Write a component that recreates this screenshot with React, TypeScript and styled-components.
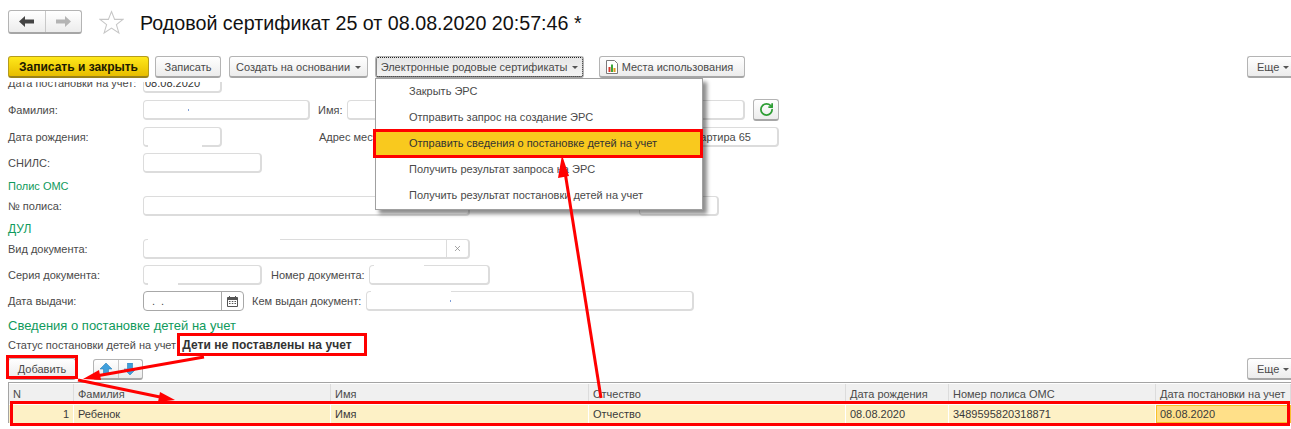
import React from "react"
import styled, { createGlobalStyle, css } from "styled-components"
import { RotateCw, X } from "lucide-react"

const GlobalStyle = createGlobalStyle`
  html, body {
    margin: 0;
    padding: 0;
    background: #fff;
    overflow: hidden;
  }
`

const TEXT = "#4a4a4a"
const GREEN = "#0f9a5c"
const FIELD_BORDER = "#dcdcdc"

const buttonSurface = css`
  box-sizing: border-box;
  height: 22px;
  display: flex;
  align-items: center;
  border: 1px solid #b4b4b4;
  border-bottom: 2px solid #a6a6a6;
  border-radius: 3px;
  background: linear-gradient(#ffffff, #ececec);
  color: ${TEXT};
`

const Page = styled.div`
  position: relative;
  width: 1291px;
  height: 429px;
  overflow: hidden;
  background: #fff;
  font-family: "Liberation Sans", Arial, sans-serif;
  font-size: 11px;
  color: ${TEXT};
`

const Header = styled.header`
  display: flex;
  align-items: center;
  height: 44px;
  padding-left: 8px;
`

const NavGroup = styled.div`
  ${buttonSurface};
  width: 74px;
  height: 24px;
`

const NavButton = styled.div<{ $divided?: boolean }>`
  flex: 1;
  height: 100%;
  display: flex;
  align-items: center;
  justify-content: center;
  ${(p) => p.$divided && "border-left: 1px solid #c8c8c8;"}
`

const Star = styled.svg`
  width: 25px;
  height: 25px;
  margin-left: 17px;
`

const Title = styled.h1`
  margin: 2px 0 0 16px;
  font-size: 19.7px;
  font-weight: 400;
  color: #111;
  white-space: nowrap;
`

const Toolbar = styled.div`
  display: flex;
  align-items: center;
  height: 22px;
  margin-top: 12px;
  padding-left: 8px;
`

const ToolButton = styled.div<{ $w: number; $gap?: number }>`
  ${buttonSurface};
  width: ${(p) => p.$w}px;
  margin-left: ${(p) => p.$gap ?? 0}px;
  justify-content: center;
  gap: 5px;
  white-space: nowrap;
`

const PrimaryButton = styled(ToolButton)`
  border-color: #b59c1c;
  border-bottom-color: #99821a;
  background: linear-gradient(#ffe81a, #e7bd00);
  color: #1c1a00;
  font-size: 12px;
  font-weight: 700;
`

const UsageButton = styled(ToolButton)`
  gap: 4px;
  padding-right: 5px;
`

const MenuAnchor = styled.div`
  position: relative;
  margin-left: 7px;
`

const FocusedButton = styled.div`
  ${buttonSurface};
  width: 209px;
  justify-content: center;
  gap: 5px;
  white-space: nowrap;
  background: linear-gradient(#e6e6e6, #f3f3f3);
  outline: 1px dotted #222;
  outline-offset: -2px;
`

const Caret = styled.span`
  width: 0;
  height: 0;
  margin-top: 1px;
  border-left: 3px solid transparent;
  border-right: 3px solid transparent;
  border-top: 3px solid #555;
`

const RightSlot = styled.div`
  margin-left: auto;
`

const MoreButton = styled.div`
  ${buttonSurface};
  width: 44px;
  padding-left: 9px;
  gap: 4px;
  border-right: none;
  border-radius: 3px 0 0 3px;
`

const Menu = styled.div`
  position: absolute;
  top: 22px;
  left: 0;
  z-index: 3;
  width: 328px;
  box-sizing: border-box;
  border: 1px solid #a0a0a0;
  background: #fff;
  box-shadow: 4px 4px 4px rgba(0, 0, 0, 0.45);
`

const MenuItem = styled.div<{ $active?: boolean }>`
  height: 26px;
  line-height: 25px;
  padding-left: 33px;
  white-space: nowrap;
  ${(p) => p.$active && "background: #f9c91e; color: #333;"}
`

const Form = styled.div`
  height: 236px;
  margin-top: 4px;
  overflow: hidden;
  padding-left: 8px;
`

const Row = styled.div<{ $top: number }>`
  display: flex;
  align-items: center;
  height: 20px;
  margin-top: ${(p) => p.$top}px;
  white-space: nowrap;
`

const Label = styled.span<{ $w?: number; $gap?: number }>`
  width: ${(p) => p.$w ?? 135}px;
  margin-left: ${(p) => p.$gap ?? 0}px;
  flex: none;
`

// $wipeTop / $wipeBottom: the part of the frame that was painted out in the original picture
const Field = styled.div<{
  $w: number
  $gap?: number
  $end?: number
  $wipeTop?: number
  $wipeBottom?: number
}>`
  position: relative;
  box-sizing: border-box;
  width: ${(p) => p.$w}px;
  height: 20px;
  margin-left: ${(p) => p.$gap ?? 0}px;
  flex: none;
  display: flex;
  align-items: center;
  justify-content: flex-end;
  padding-right: ${(p) => p.$end ?? 0}px;
  border: 2px solid ${FIELD_BORDER};
  border-width: 1px 2px 2px 1px;
  border-radius: 4px;
  background: #fff;

  &::before {
    content: "";
    position: absolute;
    left: 4px;
    top: -1px;
    height: 1px;
    width: ${(p) => p.$wipeTop ?? 0}px;
    background: #fff;
  }

  &::after {
    content: "";
    position: absolute;
    left: 4px;
    bottom: -2px;
    height: 2px;
    width: ${(p) => p.$wipeBottom ?? 0}px;
    background: #fff;
  }
`

const FieldValue = styled.span`
  margin-right: auto;
  padding-left: 1px;
  color: #333;
`

const Speck = styled.span<{ $x: number }>`
  width: 1px;
  height: 2px;
  margin-right: auto;
  margin-left: ${(p) => p.$x}px;
  background: #7f9fd8;
`

const ClearCell = styled.span`
  width: 21px;
  height: 100%;
  display: flex;
  align-items: center;
  justify-content: center;
  border-left: 1px solid ${FIELD_BORDER};
`

const SectionTitle = styled.div<{ $top: number; $size: number; $inset?: boolean }>`
  height: 20px;
  line-height: 20px;
  margin-top: ${(p) => p.$top}px;
  padding-left: ${(p) => (p.$inset ? 8 : 0)}px;
  color: ${GREEN};
  font-size: ${(p) => p.$size}px;
`

const RefreshButton = styled.div`
  ${buttonSurface};
  width: 26px;
  margin-left: 8px;
  justify-content: center;
  color: #2e9e35;
`

const DateField = styled.div`
  display: flex;
  box-sizing: border-box;
  width: 101px;
  height: 20px;
  flex: none;
  border: 1px solid #a8a8a8;
  border-radius: 4px;
  background: #fff;
`

const DateValue = styled.span`
  flex: 1;
  padding-left: 8px;
  line-height: 18px;
  word-spacing: 3px;
`

const DatePicker = styled.span`
  width: 21px;
  display: flex;
  align-items: center;
  justify-content: center;
  border-left: 1px solid #a8a8a8;
`

const StatusLine = styled.div`
  display: flex;
  align-items: center;
  height: 19px;
  margin-top: -1px;
  padding-left: 8px;
`

const StatusValue = styled.strong`
  margin-left: 6px;
  color: #333;
  font-size: 12px;
  font-weight: 700;
  letter-spacing: 0.05px;
`

const TableBar = styled.div`
  display: flex;
  align-items: center;
  height: 22px;
  margin-top: 4px;
  padding-left: 8px;
`

const ArrowGroup = styled.div`
  ${buttonSurface};
  width: 50px;
  height: 21px;
  margin-left: 17px;
`

const ArrowButton = styled.div<{ $divided?: boolean }>`
  flex: 1;
  height: 100%;
  display: flex;
  align-items: center;
  justify-content: center;
  ${(p) => p.$divided && "border-left: 1px solid #c8c8c8;"}
`

const Table = styled.div`
  margin: 2px 0 0 8px;
  border-top: 1px solid #a4a4a4;
  border-left: 1px solid #a4a4a4;
  display: grid;
  grid-template-columns: 65px 257px 258px 257px 103px 207px 1fr;
`

const HeadCell = styled.div`
  height: 20px;
  line-height: 20px;
  margin-top: 1px;
  padding-left: 4px;
  background: #f0f0f0;
  border-right: 1px solid #dcdcdc;
  white-space: nowrap;
  overflow: hidden;
`

const BodyCell = styled.div<{ $right?: boolean; $current?: boolean }>`
  box-sizing: border-box;
  height: 18px;
  line-height: 18px;
  margin-top: 1px;
  padding: 0 4px;
  background: #fdf1c6;
  border-right: 1px solid #fff;
  color: #3a3a3a;
  white-space: nowrap;
  ${(p) => p.$right && "text-align: right;"}
  ${(p) =>
    p.$current &&
    "background: #ffe089; border: 1px solid #f7c02c; line-height: 16px; padding: 0 3px;"}
`

const Annotations = styled.svg`
  position: absolute;
  top: 0;
  left: 0;
  z-index: 5;
  pointer-events: none;
`

const columns = ["N", "Фамилия", "Имя", "Отчество", "Дата рождения", "Номер полиса ОМС", "Дата постановки на учет"]
const rowValues = ["1", "Ребенок", "Имя", "Отчество", "08.08.2020", "3489595820318871", "08.08.2020"]
const menuItems = [
  "Закрыть ЭРС",
  "Отправить запрос на создание ЭРС",
  "Отправить сведения о постановке детей на учет",
  "Получить результат запроса на ЭРС",
  "Получить результат постановки детей на учет",
]

const NavArrow: React.FC<{ left?: boolean; color: string }> = ({ left, color }) => (
  <svg width="15" height="11" viewBox="0 0 15 11">
    <path
      d={left ? "M0 5.5 6 0v3.5h9v4H6V11z" : "M15 5.5 9 0v3.5H0v4h9V11z"}
      fill={color}
    />
  </svg>
)

const BlueArrow: React.FC<{ up?: boolean }> = ({ up }) => (
  <svg width="12" height="12" viewBox="0 0 12 12">
    <path
      d={up ? "M6 0 12 6H8.500v6h-5V6H0z" : "M6 12 12 6H8.500V0h-5v6H0z"}
      fill="#3f9fdc"
      stroke="#2c7fb8"
      strokeWidth="0.6"
    />
  </svg>
)

const ChartIcon = () => (
  <svg width="12" height="14" viewBox="0 0 12 14">
    <path d="M.5.5h8l3 3v10H.5z" fill="#fff" stroke="#7a7a7a" />
    <rect x="2.5" y="7" width="2" height="5" fill="#d9392c" />
    <rect x="5" y="4.5" width="2" height="7.5" fill="#3aa53a" />
    <rect x="7.5" y="8" width="2" height="4" fill="#e09a1c" />
  </svg>
)

const CalendarIcon = () => (
  <svg width="11" height="11" viewBox="0 0 11 11">
    <path d="M.5 1.5h10v9H.5z" fill="#fff" stroke="#555" />
    <path d="M.5 1.5h10v2.5H.5z" fill="#555" />
    <path d="M2.5 0v2M8.5 0v2" stroke="#555" />
    <path d="M2 5.5h1.5M4.800 5.5h1.500M7.500 5.5H9M2 7.500h1.500M4.800 7.500h1.500M7.500 7.500H9" stroke="#555" />
  </svg>
)

const App: React.FC = () => (
  <Page>
    <GlobalStyle />
    <Header>
      <NavGroup>
        <NavButton>
          <NavArrow left color="#444" />
        </NavButton>
        <NavButton $divided>
          <NavArrow color="#b4b4b4" />
        </NavButton>
      </NavGroup>
      <Star viewBox="0 0 24 24">
        <path
          d="M12 1.500 15 9h8l-6.300 5 2.400 8L12 17.300 4.900 22l2.400-8L1 9h8z"
          fill="#fff"
          stroke="#c6c6c6"
        />
      </Star>
      <Title>Родовой сертификат 25 от 08.08.2020 20:57:46 *</Title>
    </Header>

    <Toolbar>
      <PrimaryButton $w={141}>Записать и закрыть</PrimaryButton>
      <ToolButton $w={66} $gap={6}>Записать</ToolButton>
      <ToolButton $w={139} $gap={8}>
        Создать на основании <Caret />
      </ToolButton>
      <MenuAnchor>
        <FocusedButton>
          Электронные родовые сертификаты <Caret />
        </FocusedButton>
        <Menu>
          {menuItems.map((item, i) => (
            <MenuItem key={item} $active={i === 2}>
              {item}
            </MenuItem>
          ))}
        </Menu>
      </MenuAnchor>
      <UsageButton $w={146} $gap={15}>
        <ChartIcon /> Места использования
      </UsageButton>
      <RightSlot>
        <MoreButton>
          Еще <Caret />
        </MoreButton>
      </RightSlot>
    </Toolbar>

    <Form>
      <Row $top={-9}>
        <Label>Дата постановки на учет:</Label>
        <Field $w={79}>
          <FieldValue>08.08.2020</FieldValue>
        </Field>
      </Row>
      <Row $top={7}>
        <Label>Фамилия:</Label>
        <Field $w={167}>
          <Speck $x={44} />
        </Field>
        <Label $w={29} $gap={8}>Имя:</Label>
        <Field $w={398} />
        <RefreshButton>
          <RotateCw size={15} strokeWidth={2.8} />
        </RefreshButton>
      </Row>
      <Row $top={7}>
        <Label>Дата рождения:</Label>
        <Field $w={79} $wipeBottom={54} />
        <Label $w={97} $gap={97}>Адрес места</Label>
        <Field $w={363} $end={26}>квартира 65</Field>
      </Row>
      <Row $top={6}>
        <Label>СНИЛС:</Label>
        <Field $w={119} />
      </Row>
      <SectionTitle $top={3} $size={11}>Полис ОМС</SectionTitle>
      <Row $top={0}>
        <Label>№ полиса:</Label>
        <Field $w={327} />
        <Field $w={80} $gap={169} />
      </Row>
      <SectionTitle $top={3} $size={12}>ДУЛ</SectionTitle>
      <Row $top={0}>
        <Label>Вид документа:</Label>
        <Field $w={327} $wipeTop={132}>
          <ClearCell>
            <X size={9} color="#888" strokeWidth={2} />
          </ClearCell>
        </Field>
      </Row>
      <Row $top={6}>
        <Label>Серия документа:</Label>
        <Field $w={119} $wipeBottom={30} />
        <Label $w={98} $gap={9}>Номер документа:</Label>
        <Field $w={121} $wipeTop={50} />
      </Row>
      <Row $top={6}>
        <Label>Дата выдачи:</Label>
        <DateField>
          <DateValue>. .</DateValue>
          <DatePicker>
            <CalendarIcon />
          </DatePicker>
        </DateField>
        <Label $w={114} $gap={8}>Кем выдан документ:</Label>
        <Field $w={328} $wipeTop={80}>
          <Speck $x={83} />
        </Field>
      </Row>
    </Form>

    <SectionTitle $top={-2} $size={13} $inset>
      Сведения о постановке детей на учет
    </SectionTitle>
    <StatusLine>
      Статус постановки детей на учет
      <StatusValue>Дети не поставлены на учет</StatusValue>
    </StatusLine>
    <TableBar>
      <ToolButton $w={68}>Добавить</ToolButton>
      <ArrowGroup>
        <ArrowButton>
          <BlueArrow up />
        </ArrowButton>
        <ArrowButton $divided>
          <BlueArrow />
        </ArrowButton>
      </ArrowGroup>
      <RightSlot>
        <MoreButton>
          Еще <Caret />
        </MoreButton>
      </RightSlot>
    </TableBar>
    <Table>
      {columns.map((c) => (
        <HeadCell key={c}>{c}</HeadCell>
      ))}
      {rowValues.map((v, i) => (
        <BodyCell key={i} $right={i === 0} $current={i === 6}>
          {v}
        </BodyCell>
      ))}
    </Table>

    <Annotations width="1291" height="429" viewBox="0 0 1291 429">
      <g fill="none" stroke="#f00" strokeWidth="3">
        <rect x="374.500" y="130.500" width="327" height="26" />
        <rect x="178.500" y="334.500" width="187" height="20" />
        <rect x="7.500" y="356.500" width="69" height="21" />
        <rect x="11.500" y="402.500" width="1277" height="22" />
      </g>
      <g stroke="#f00" strokeWidth="3" fill="#f00">
        <path d="M204 357 96 376" />
        <path d="M83 379 99 370 101 380z" stroke="none" />
        <path d="M78 380 160 397" />
        <path d="M175 400 158 402 160 392z" stroke="none" />
        <path d="M601 398 565 172" />
        <path d="M562 155 569 176 558 178z" stroke="none" />
      </g>
    </Annotations>
  </Page>
)

export default App
